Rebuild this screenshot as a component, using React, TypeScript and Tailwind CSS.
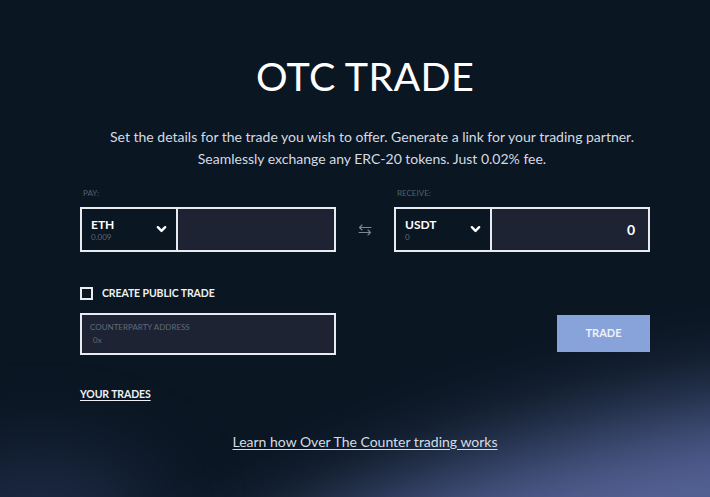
import { useState } from "react";

function Chevron() {
  return (
    <svg className="h-[9px] w-[11px]" viewBox="0 0 12 9" fill="none" stroke="currentColor" strokeWidth={2.6} strokeLinecap="round" strokeLinejoin="round">
      <path d="M2 2l4 4 4-4" />
    </svg>
  );
}

function SwapIcon() {
  return (
    <svg className="h-[12px] w-[14px] text-[#7d8794]" viewBox="0 0 14 12" fill="none" stroke="currentColor" strokeWidth={1.1} strokeLinecap="round" strokeLinejoin="round">
      <path d="M13 3.5H1.5M4 1L1.5 3.5 4 6" />
      <path d="M1 8.5h11.5M10 6l2.5 2.5L10 11" />
    </svg>
  );
}

function TokenBox({ label, token, balance, amount }: { label: string; token: string; balance: string; amount?: string }) {
  return (
    <div className="w-[256px]">
      <div className="pl-[3px] text-[8px] leading-[10px] uppercase text-[#56616f]">{label}</div>
      <div className="mt-[9px] flex h-[45px] border-2 border-[#e8ebef]">
        <div className="flex w-[96px] items-center justify-between border-r-2 border-[#e8ebef] bg-[#0a1622] pl-[9px] pr-[9px]">
          <div className="flex flex-col pt-[2px]">
            <span className="text-[12px] leading-[13px] font-bold text-white">{token}</span>
            <span className="mt-[1px] text-[8px] leading-[10px] text-[#5d6977]">{balance}</span>
          </div>
          <span className="text-white">
            <Chevron />
          </span>
        </div>
        <div className="flex flex-1 items-center justify-end bg-[#1e2333] pr-[13px] text-[14px] font-bold text-white">
          {amount}
        </div>
      </div>
    </div>
  );
}

export default function App() {
  const [isPublic, setIsPublic] = useState(false);

  return (
    <div
      className="relative h-[497px] w-[710px] overflow-hidden bg-[#0a1622] text-white"
      style={{ fontFamily: "Lato, 'Open Sans', sans-serif" }}
    >
      {/* soft glow in the lower corners */}
      <div className="pointer-events-none absolute -bottom-[170px] right-[-220px] h-[210px] w-[820px] -rotate-[18deg] rounded-[50%] bg-[#6f7dc0] opacity-75 blur-[50px]" />
      <div className="pointer-events-none absolute -bottom-[80px] -left-[80px] h-[120px] w-[240px] rounded-[50%] bg-[#34426f] opacity-50 blur-[45px]" />

      <div className="relative ml-[80px] w-[570px] pt-[56px]">
        <h1 className="text-center text-[39.5px] leading-none font-normal tracking-[0.3px] text-white">OTC TRADE</h1>

        <p className="mt-[30px] pl-[14px] text-center text-[14px] leading-[22px] text-[#d5dbe2]">
          Set the details for the trade you wish to offer. Generate a link for your trading partner.
          <br />
          Seamlessly exchange any ERC-20 tokens. Just 0.02% fee.
        </p>

        <div className="mt-[18px] flex items-start justify-between">
          <TokenBox label="Pay:" token="ETH" balance="0.009" />
          <div className="flex h-[64px] items-end pb-[16px]">
            <SwapIcon />
          </div>
          <TokenBox label="Receive:" token="USDT" balance="0" amount="0" />
        </div>

        <label className="mt-[35px] flex cursor-pointer items-center gap-[9px]">
          <button
            onClick={() => setIsPublic(!isPublic)}
            className="h-[13px] w-[13px] border-2 border-[#e8ebef] bg-transparent"
          />
          <span className="text-[10.5px] leading-[12px] font-bold tracking-[-0.1px] text-[#eef1f4]">CREATE PUBLIC TRADE</span>
        </label>

        <div className="mt-[13px] flex items-center justify-between">
          <div className="flex h-[42px] w-[256px] flex-col justify-center border-2 border-[#e8ebef] bg-[#1e2333] pl-[8px]">
            <span className="text-[8px] leading-[10px] text-[#5f6a7a]">COUNTERPARTY ADDRESS</span>
            <span className="mt-[3px] pl-[3px] text-[8px] leading-[10px] text-[#5f6a7a]">0x</span>
          </div>
          <button className="h-[37px] w-[93px] bg-[#87a3da] text-[11px] font-bold text-[#eef2fa]">TRADE</button>
        </div>

        <a className="mt-[33px] inline-block text-[10.5px] leading-[12px] font-bold tracking-[-0.1px] text-[#eef1f4] underline underline-offset-2">
          YOUR TRADES
        </a>

        <div className="mt-[25px] text-center">
          <a className="text-[14px] leading-[18px] text-[#d3dde4] underline underline-offset-2">
            Learn how Over The Counter trading works
          </a>
        </div>
      </div>
    </div>
  );
}
